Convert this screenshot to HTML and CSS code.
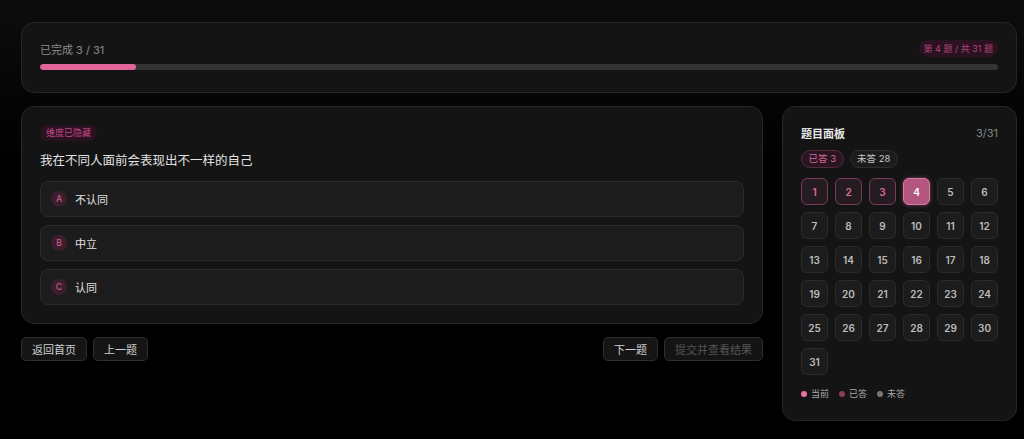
FILE: index.html
```html
<!DOCTYPE html>
<html lang="zh-CN">
<head>
<meta charset="utf-8">
<title>测验</title>
<link rel="stylesheet" href="styles.css">
</head>
<body>
<div class="page">
  <section class="card progress-card">
    <div class="progress-head">
      <span class="done">已完成 3 / 31</span>
      <span class="badge">第 4 题 / 共 31 题</span>
    </div>
    <div class="bar"><div class="fill" style="width:10%"></div></div>
  </section>

  <div class="main">
    <div class="left">
      <section class="card question-card">
        <span class="tag">维度已隐藏</span>
        <h2 class="question">我在不同人面前会表现出不一样的自己</h2>
        <div class="options">
          <button class="option"><span class="letter">A</span><span>不认同</span></button>
          <button class="option"><span class="letter">B</span><span>中立</span></button>
          <button class="option"><span class="letter">C</span><span>认同</span></button>
        </div>
      </section>
      <div class="nav">
        <div class="nav-group">
          <button class="btn">返回首页</button>
          <button class="btn">上一题</button>
        </div>
        <div class="nav-group">
          <button class="btn">下一题</button>
          <button class="btn disabled">提交并查看结果</button>
        </div>
      </div>
    </div>

    <aside class="card panel">
      <div class="panel-head">
        <span class="panel-title">题目面板</span>
        <span class="panel-count">3/31</span>
      </div>
      <div class="chips">
        <span class="chip chip-done">已答 3</span>
        <span class="chip">未答 28</span>
      </div>
      <div class="grid">
        <span class="cell answered">1</span>
        <span class="cell answered">2</span>
        <span class="cell answered">3</span>
        <span class="cell current">4</span>
        <span class="cell">5</span>
        <span class="cell">6</span>
        <span class="cell">7</span>
        <span class="cell">8</span>
        <span class="cell">9</span>
        <span class="cell">10</span>
        <span class="cell">11</span>
        <span class="cell">12</span>
        <span class="cell">13</span>
        <span class="cell">14</span>
        <span class="cell">15</span>
        <span class="cell">16</span>
        <span class="cell">17</span>
        <span class="cell">18</span>
        <span class="cell">19</span>
        <span class="cell">20</span>
        <span class="cell">21</span>
        <span class="cell">22</span>
        <span class="cell">23</span>
        <span class="cell">24</span>
        <span class="cell">25</span>
        <span class="cell">26</span>
        <span class="cell">27</span>
        <span class="cell">28</span>
        <span class="cell">29</span>
        <span class="cell">30</span>
        <span class="cell">31</span>
      </div>
      <div class="legend">
        <span class="legend-item"><i class="dot dot-current"></i>当前</span>
        <span class="legend-item"><i class="dot dot-done"></i>已答</span>
        <span class="legend-item"><i class="dot dot-todo"></i>未答</span>
      </div>
    </aside>
  </div>
</div>
</body>
</html>
```

FILE: styles.css
```css
* { box-sizing: border-box; }
html, body { margin: 0; height: 100%; }
body {
  background: linear-gradient(180deg, #0d0d0d 0%, #050505 22%, #000 40%);
  font-family: "Inter", "Noto Sans CJK SC", sans-serif;
  color: #ddd;
}
.page {
  padding: 22px 7px 0 21px;
  display: flex;
  flex-direction: column;
  gap: 13px;
}
.card {
  background: #141414;
  border: 1px solid #262626;
  border-radius: 13px;
}
.progress-card {
  height: 71px;
  padding: 17px 18px 0 18px;
}
.progress-head {
  display: flex;
  justify-content: space-between;
  align-items: center;
  height: 17px;
}
.done { font-size: 11px; color: #8c8c8c; }
.badge {
  font-size: 9px;
  color: #b2457c;
  background: #2a1220;
  border-radius: 9px;
  padding: 0 5px;
  height: 17px;
  line-height: 17px;
}
.bar {
  margin-top: 7px;
  height: 6px;
  background: #333;
  border-radius: 3px;
  overflow: hidden;
}
.fill { height: 100%; background: #e2649b; border-radius: 3px; }

.main {
  display: flex;
  gap: 19px;
  align-items: flex-start;
}
.left { width: 742px; display: flex; flex-direction: column; gap: 13px; }
.question-card {
  padding: 18px;
  display: flex;
  flex-direction: column;
  align-items: flex-start;
}
.tag {
  font-size: 9px;
  color: #c0498a;
  background: #2a1220;
  border-radius: 8px;
  height: 16px;
  line-height: 16px;
  padding: 0 6px;
}
.question {
  margin: 11px 0 0;
  font-size: 12.5px;
  font-weight: 400;
  color: #e2e2e2;
  line-height: 18px;
}
.options {
  align-self: stretch;
  margin-top: 11px;
  display: flex;
  flex-direction: column;
  gap: 8px;
}
.option {
  height: 36px;
  display: flex;
  align-items: center;
  gap: 8px;
  padding: 0 10px;
  background: #1c1c1c;
  border: 1px solid #2c2c2c;
  border-radius: 8px;
  font-family: inherit;
  font-size: 11px;
  color: #e0e0e0;
  text-align: left;
}
.letter {
  width: 16px; height: 16px;
  border-radius: 50%;
  background: #3b1f2c;
  color: #b8508a;
  font-size: 8.5px;
  font-weight: 600;
  display: flex; align-items: center; justify-content: center;
}
.nav { display: flex; justify-content: space-between; }
.nav-group { display: flex; gap: 6px; }
.btn {
  height: 24px;
  padding: 0 10px;
  background: #151515;
  border: 1px solid #2e2e2e;
  border-radius: 5px;
  font-family: inherit;
  font-size: 11px;
  color: #d0d0d0;
}
.btn.disabled { color: #555; background: #141414; }

.panel {
  width: 235px;
  padding: 18px 18px 20px 18px;
}
.panel-head {
  display: flex; justify-content: space-between; align-items: center;
  height: 16px;
}
.panel-title { font-size: 11px; font-weight: 600; color: #e8e8e8; }
.panel-count { font-size: 11px; color: #858585; }
.chips { margin-top: 9px; display: flex; gap: 6px; }
.chip {
  height: 18px; line-height: 16px;
  padding: 0 6.5px;
  font-size: 9.5px;
  color: #c9c9c9;
  background: #1c1c1c;
  border: 1px solid #2e2e2e;
  border-radius: 9px;
}
.chip-done { color: #d66a9c; background: #2a1620; border-color: #56283f; }
.grid {
  margin-top: 10px;
  display: grid;
  grid-template-columns: repeat(6, 1fr);
  gap: 7px;
}
.cell {
  aspect-ratio: 1;
  display: flex; align-items: center; justify-content: center;
  background: #1c1c1c;
  border: 1px solid #2b2b2b;
  border-radius: 6px;
  font-size: 10px;
  font-weight: 600;
  color: #bdbdbd;
}
.cell.answered { background: #241c20; border-color: #7a3a5a; color: #e06a9a; }
.cell.current {
  background: #b3567f; border-color: #d57ea3; color: #fff;
  box-shadow: 0 0 4px rgba(210, 100, 150, 0.5);
}
.legend { margin-top: 12px; display: flex; gap: 10px; font-size: 9px; color: #a8a8a8; }
.legend-item { display: flex; align-items: center; gap: 4px; }
.dot { width: 6px; height: 6px; border-radius: 50%; display: inline-block; }
.dot-current { background: #ec72a6; }
.dot-done { background: #8a3a5c; }
.dot-todo { background: #777; }
```
